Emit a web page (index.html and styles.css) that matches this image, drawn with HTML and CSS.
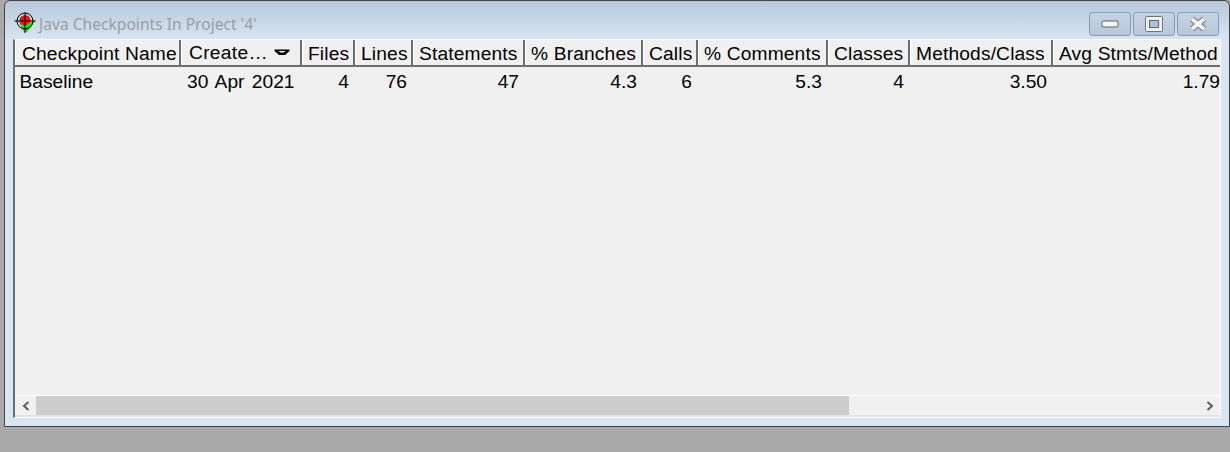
FILE: index.html
```html
<!DOCTYPE html>
<html lang="en">
<head>
    <meta charset="UTF-8">
    <title>Java Checkpoints In Project '4'</title>
    <link rel="stylesheet" href="styles.css">
</head>
<body>
    <div class="window">
        <div class="titlebar">
            <svg class="app-icon" width="22" height="22" viewBox="0 0 22 22">
                <circle cx="11" cy="8.5" r="5.5" fill="#f01010"/>
                <path d="M5 10.5 L10 20 L13 20 L21.5 8.5 L16 10 L11 14 Z" fill="#14e014"/>
                <circle cx="11" cy="9" r="8" fill="none" stroke="#000" stroke-width="1"/>
                <path d="M11 0.5 V21 M0.5 9 H21.5" stroke="#000" stroke-width="1"/>
            </svg>
            <span class="title">Java Checkpoints In Project '4'</span>
            <div class="win-buttons">
                <div class="win-btn">
                    <svg width="18" height="8" viewBox="0 0 18 8"><rect x="1" y="1" width="16" height="6" rx="1" fill="#f4f4f4" stroke="#5b6470"/></svg>
                </div>
                <div class="win-btn">
                    <svg width="18" height="16" viewBox="0 0 18 16"><rect x="0.5" y="0.5" width="17" height="15" rx="1" fill="#f0f0f0" stroke="#6b7480"/><rect x="4.5" y="4.5" width="9" height="7" fill="#b0c0d4" stroke="#5b6470"/></svg>
                </div>
                <div class="win-btn">
                    <svg width="20" height="16" viewBox="0 0 20 16"><path d="M4 3 L16 13 M16 3 L4 13" stroke="#6b7480" stroke-width="6"/><path d="M4 3 L16 13 M16 3 L4 13" stroke="#f2f2f2" stroke-width="4"/></svg>
                </div>
            </div>
        </div>
        <div class="client">
            <div class="grid-view">
                <div class="grid-row header">
                    <div class="cell first">Checkpoint Name</div>
                    <div class="cell sorted">Create…
                        <svg class="sort-arrow" width="16" height="7" viewBox="0 0 16 7"><path d="M0.5 0.5 H15.5 V2 L11 6 H5 L0.5 2 Z" fill="#000"/><path d="M4.5 2 H11.5 L9.5 3.6 H6.5 Z" fill="#fff"/></svg>
                    </div>
                    <div class="cell">Files</div>
                    <div class="cell">Lines</div>
                    <div class="cell">Statements</div>
                    <div class="cell">% Branches</div>
                    <div class="cell">Calls</div>
                    <div class="cell">% Comments</div>
                    <div class="cell">Classes</div>
                    <div class="cell">Methods/Class</div>
                    <div class="cell">Avg Stmts/Method</div>
                </div>
                <div class="grid-row data">
                    <div class="cell left">Baseline</div>
                    <div class="cell left">30 Apr 2021</div>
                    <div class="cell">4</div>
                    <div class="cell">76</div>
                    <div class="cell">47</div>
                    <div class="cell">4.3</div>
                    <div class="cell">6</div>
                    <div class="cell">5.3</div>
                    <div class="cell">4</div>
                    <div class="cell">3.50</div>
                    <div class="cell">1.79</div>
                </div>
            </div>
            <div class="hscroll">
                <div class="arrow-btn">
                    <svg width="8" height="10" viewBox="0 0 8 10"><path d="M6.5 1 L2 5 L6.5 9" fill="none" stroke="#5f5f5f" stroke-width="2"/></svg>
                </div>
                <div class="track"><div class="thumb"></div></div>
                <div class="arrow-btn">
                    <svg width="8" height="10" viewBox="0 0 8 10"><path d="M1.5 1 L6 5 L1.5 9" fill="none" stroke="#5f5f5f" stroke-width="2"/></svg>
                </div>
            </div>
        </div>
    </div>
</body>
</html>
```

FILE: styles.css
```css
html, body {
    margin: 0;
    padding: 0;
}
body {
    background-color: #a9a9a9;
    height: 452px;
    overflow: hidden;
    font-family: "Liberation Sans", Arial, sans-serif;
    color: #000;
}
.window {
    box-sizing: border-box;
    height: 427px;
    margin-left: 4px;
    border: 1px solid #444;
    border-radius: 6px 6px 0 0;
    background: linear-gradient(to bottom, #b8c8db 0, #d9e5f2 40px, #d9e5f2 100%);
    padding: 0 8px 8px 8px;
    display: flex;
    flex-direction: column;
}
.titlebar {
    height: 38px;
    flex: none;
    display: flex;
    align-items: center;
}
.app-icon {
    margin-left: 1px;
    margin-top: 5px;
}
.title {
    margin-left: 3px;
    margin-top: 8px;
    font-family: "Noto Sans", sans-serif;
    font-size: 15.6px;
    color: #9a9da3;
}
.win-buttons {
    margin-left: auto;
    margin-right: 2px;
    margin-top: 7px;
    display: flex;
    gap: 2px;
}
.win-btn {
    box-sizing: border-box;
    width: 42px;
    height: 24px;
    border: 1px solid #8a9cb5;
    border-radius: 3px;
    background: linear-gradient(to bottom, #c6d3e2, #b7c7da);
    display: flex;
    align-items: center;
    justify-content: center;
}
.client {
    flex: 1;
    min-height: 0;
    box-sizing: border-box;
    border-left: 2px solid #6d6d6d;
    border-top: 1px solid #fff;
    border-right: 1px solid #fff;
    border-bottom: 1px solid #fff;
    background: #f0f0f0;
    display: flex;
    flex-direction: column;
    overflow: hidden;
}
.grid-view {
    flex: 1;
    overflow: hidden;
}
.grid-row {
    display: grid;
    grid-template-columns: 166px 121px 53px 58px 112px 118px 55px 130px 82px 143px 173px;
    width: 1211px;
    font-size: 19.2px;
}
.header {
    height: 27px;
    box-sizing: border-box;
    border-bottom: 2px solid #6d6d6d;
    letter-spacing: 0.15px;
}
.header .cell {
    box-sizing: border-box;
    height: 25px;
    line-height: 28px;
    padding: 0 0 0 6px;
    text-align: left;
    white-space: nowrap;
    overflow: hidden;
    border-right: 2px solid #6d6d6d;
    box-shadow: inset 1px 0 0 #fff;
}
.header .cell.first {
    padding-left: 7px;
}
.header .sorted {
    padding-left: 8px;
    display: flex;
    align-items: center;
    gap: 6px;
    letter-spacing: 0.3px;
}
.sort-arrow {
    flex: none;
}
.data {
    height: 30px;
    word-spacing: 2px;
}
.data .cell {
    box-sizing: border-box;
    line-height: 30px;
    padding: 0 6px 0 4.5px;
    text-align: right;
    white-space: nowrap;
}
.data .cell.left {
    text-align: left;
}
.data .cell.left + .cell.left {
    padding-left: 6px;
}
.hscroll {
    flex: none;
    height: 22px;
    box-sizing: border-box;
    border-top: 1px solid #fff;
    border-bottom: 2px solid #e3e3e3;
    display: flex;
    background: #f0f0f0;
}
.arrow-btn {
    flex: none;
    width: 21px;
    display: flex;
    align-items: center;
    justify-content: center;
}
.track {
    flex: 1;
    min-width: 0;
}
.thumb {
    width: 813px;
    height: 100%;
    background: #cdcdcd;
}
```
